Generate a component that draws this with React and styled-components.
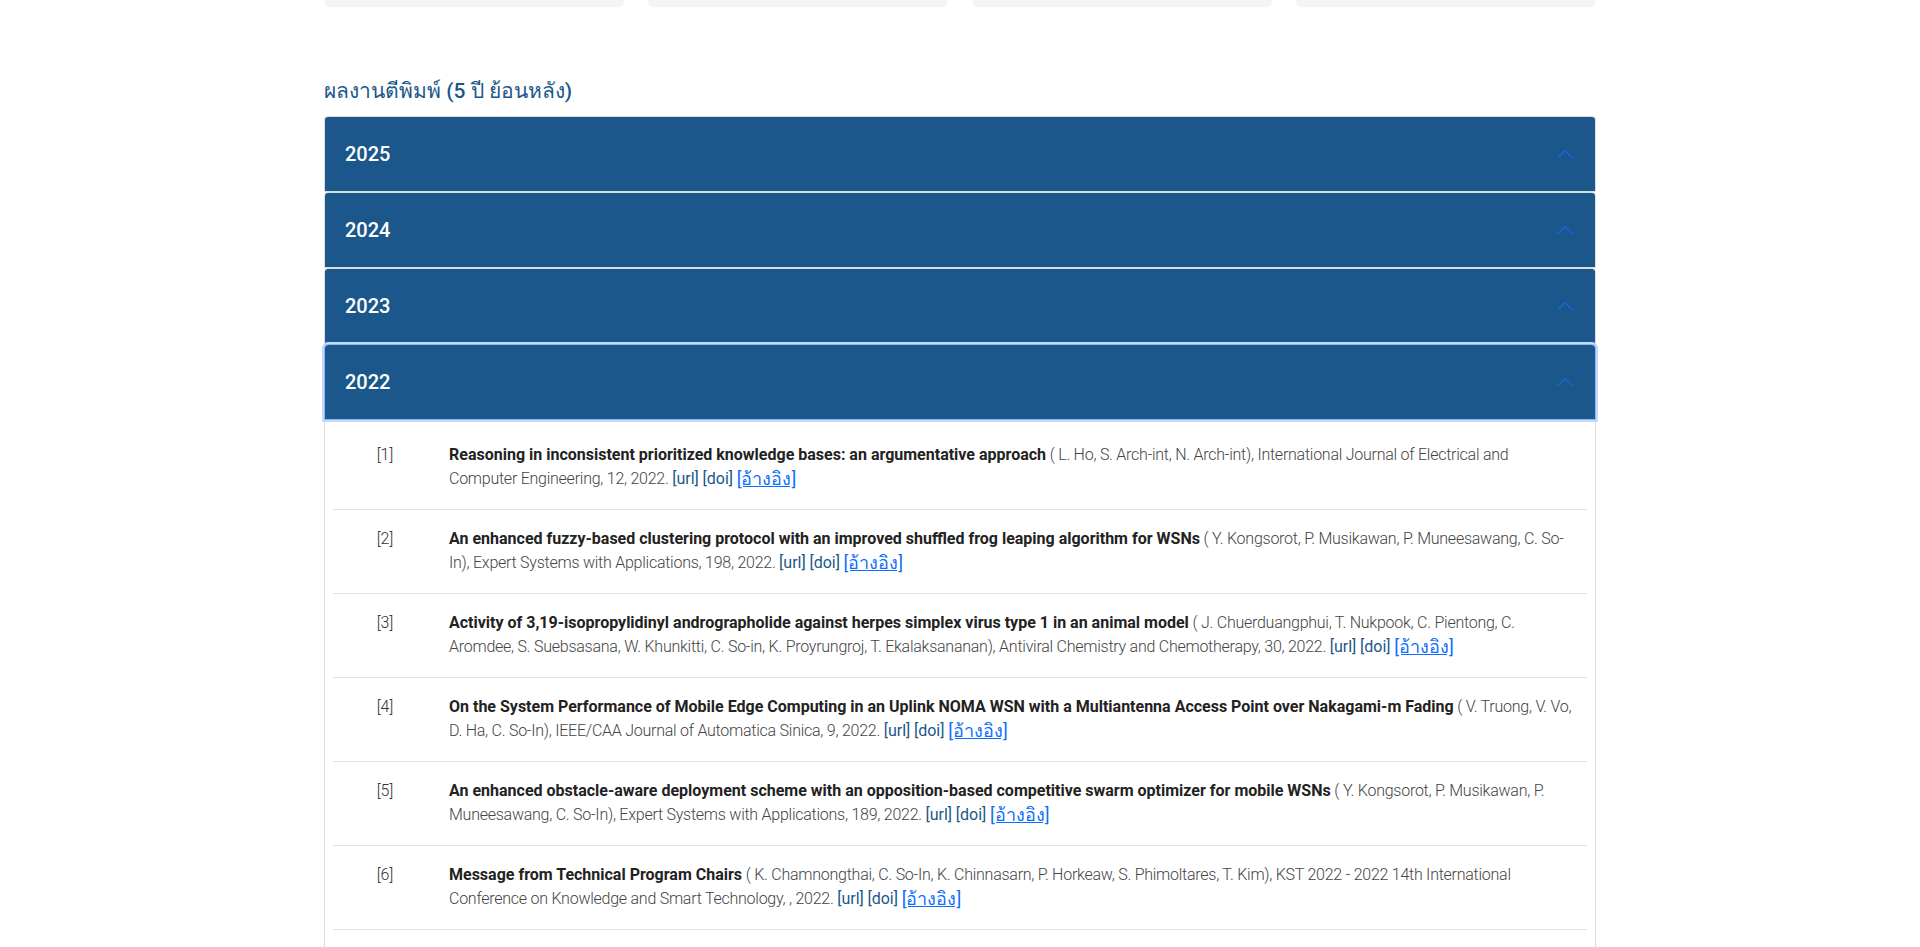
import React from 'react';
import styled, { createGlobalStyle } from 'styled-components';

const GlobalStyle = createGlobalStyle`
    body {
        margin: 0;
        background: #ffffff;
        font-family: Roboto, "Noto Sans", sans-serif;
        color: #444;
    }
`

const Page = styled.div`
    width: 1272px;
    margin: 0 auto;
`
const CardRow = styled.div`
    display: grid;
    grid-template-columns: repeat(4, 1fr);
    gap: 24px;
`
const StatCard = styled.div`
    height: 7px;
    background: #f4f4f4;
    border-radius: 0 0 6px 6px;
`
const SectionTitle = styled.h2`
    margin: 68px 0 9px;
    height: 32px;
    line-height: 32px;
    font-size: 21px;
    font-weight: 500;
    color: #1b578a;
`
const Accordion = styled.div`
    display: flex;
    flex-direction: column;
`
const Item = styled.div`
    border: 1px solid #dcdcdc;
    border-radius: 4px 4px 0 0;
`
const Header = styled.button`
    display: flex;
    width: 100%;
    height: 74px;
    align-items: center;
    justify-content: space-between;
    padding: 0 21px 0 20px;
    border: none;
    border-radius: 3px 3px 0 0;
    background: #1b578a;
    color: #ffffff;
    font-family: Roboto, "Noto Sans", sans-serif;
    font-size: 20px;
    font-weight: 500;
    cursor: pointer;
    box-shadow: ${p => p.$focused ? '0 0 0 3px #c3dafc' : 'none'};
    outline: ${p => p.$focused ? '1px solid #86b7fe' : 'none'};
    position: relative;
`
const Body = styled.div`
    padding: 7px 8px 40px;
`
const PubRow = styled.div`
    display: grid;
    grid-template-columns: 104px 1fr;
    border-bottom: 1px solid #dee2e6;
    padding: 17px 0 18px;
    font-size: 16px;
    line-height: 24px;
`
const PubNo = styled.div`
    text-align: center;
    color: #333;
    font-weight: 300;
`
const PubText = styled.div`
    padding: 0 12px;
    color: #444;
    font-weight: 300;
    letter-spacing: -0.25px;
`
const PubTitle = styled.b`
    font-weight: 700;
    letter-spacing: 0;
    color: #222;
`
const LinkText = styled.a`
    color: #1b578a;
    font-weight: 400;
    text-decoration: none;
    letter-spacing: 0;
`
const RefLink = styled.a`
    color: #0d6efd;
    font-weight: 400;
    text-decoration: underline;
    font-size: 18px;
    line-height: 20px;
    letter-spacing: 0;
    vertical-align: -1px;
`

const Chevron = () => (
    <svg width="18" height="10" viewBox="0 0 18 10" fill="none">
        <polyline points="1.5,9 9,1.5 16.5,9" stroke="#1766d8" strokeWidth="1.4" />
    </svg>
)

const pubs = [
    {
        title: 'Reasoning in inconsistent prioritized knowledge bases: an argumentative approach',
        rest: ' ( L. Ho, S. Arch-int, N. Arch-int), International Journal of Electrical and Computer Engineering, 12, 2022. '
    },
    {
        title: 'An enhanced fuzzy-based clustering protocol with an improved shuffled frog leaping algorithm for WSNs',
        rest: ' ( Y. Kongsorot, P. Musikawan, P. Muneesawang, C. So-In), Expert Systems with Applications, 198, 2022. '
    },
    {
        title: 'Activity of 3,19-isopropylidinyl andrographolide against herpes simplex virus type 1 in an animal model',
        rest: ' ( J. Chuerduangphui, T. Nukpook, C. Pientong, C. Aromdee, S. Suebsasana, W. Khunkitti, C. So-in, K. Proyrungroj, T. Ekalaksananan), Antiviral Chemistry and Chemotherapy, 30, 2022. '
    },
    {
        title: 'On the System Performance of Mobile Edge Computing in an Uplink NOMA WSN with a Multiantenna Access Point over Nakagami-m Fading',
        rest: ' ( V. Truong, V. Vo, D. Ha, C. So-In), IEEE/CAA Journal of Automatica Sinica, 9, 2022. '
    },
    {
        title: 'An enhanced obstacle-aware deployment scheme with an opposition-based competitive swarm optimizer for mobile WSNs',
        rest: ' ( Y. Kongsorot, P. Musikawan, P. Muneesawang, C. So-In), Expert Systems with Applications, 189, 2022. '
    },
    {
        title: 'Message from Technical Program Chairs',
        rest: ' ( K. Chamnongthai, C. So-In, K. Chinnasarn, P. Horkeaw, S. Phimoltares, T. Kim), KST 2022 - 2022 14th International Conference on Knowledge and Smart Technology, , 2022. '
    }
]

const years = ['2025', '2024', '2023', '2022']

const App = () => {
    const open = '2022'
    return (
        <Page>
            <GlobalStyle />
            <CardRow>
                <StatCard />
                <StatCard />
                <StatCard />
                <StatCard />
            </CardRow>
            <SectionTitle>ผลงานตีพิมพ์ (5 ปี ย้อนหลัง)</SectionTitle>
            <Accordion>
                {years.map(y => (
                    <Item key={y}>
                        <Header $focused={y === open}>
                            <span>{y}</span>
                            <Chevron />
                        </Header>
                        {y === open && (
                            <Body>
                                {pubs.map((p, i) => (
                                    <PubRow key={i}>
                                        <PubNo>[{i + 1}]</PubNo>
                                        <PubText>
                                            <PubTitle>{p.title}</PubTitle>
                                            {p.rest}
                                            <LinkText href="#">[url]</LinkText>{' '}
                                            <LinkText href="#">[doi]</LinkText>{' '}
                                            <RefLink href="#">[อ้างอิง]</RefLink>
                                        </PubText>
                                    </PubRow>
                                ))}
                            </Body>
                        )}
                    </Item>
                ))}
            </Accordion>
        </Page>
    );
};

export default App;
